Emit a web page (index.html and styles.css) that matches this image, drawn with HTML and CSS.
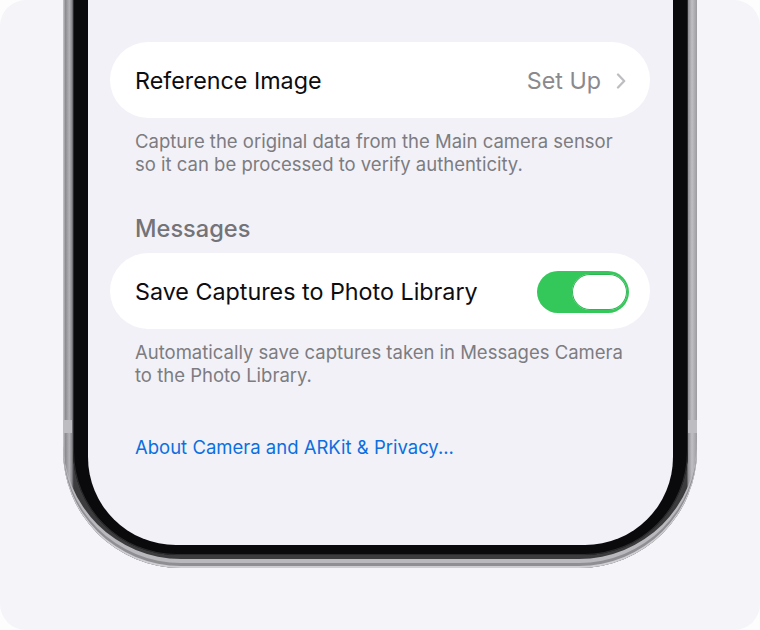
FILE: index.html
```html
<!DOCTYPE html>
<html lang="en">
<head>
<meta charset="utf-8">
<title>Camera Settings</title>
<link rel="stylesheet" href="styles.css">
</head>
<body>
<div class="card">
  <div class="phone">
    <div class="bezel">
      <div class="screen">
        <div class="group">
          <div class="row">
            <span class="row-title">Reference Image</span>
            <span class="row-detail">Set Up
              <svg class="chevron" width="10" height="16" viewBox="0 0 10 16"><path d="M2 1.5 L8.2 8 L2 14.5" fill="none" stroke="#bdbdc2" stroke-width="2.3" stroke-linecap="round" stroke-linejoin="round"/></svg>
            </span>
          </div>
        </div>
        <p class="footer">Capture the original data from the Main camera sensor so it can be processed to verify authenticity.</p>

        <h2 class="header">Messages</h2>
        <div class="group">
          <div class="row">
            <span class="row-title">Save Captures to Photo Library</span>
            <span class="toggle"><span class="knob"></span></span>
          </div>
        </div>
        <p class="footer">Automatically save captures taken in Messages Camera to the Photo Library.</p>

        <a class="link" href="#">About Camera and ARKit &amp; Privacy...</a>
      </div>
    </div>
  </div>
</div>
</body>
</html>
```

FILE: styles.css
```css
* { box-sizing: border-box; }
html, body { margin: 0; padding: 0; background: #fdfdfe; }
body { width: 760px; height: 630px; overflow: hidden; font-family: Inter, "Noto Sans", "Liberation Sans", sans-serif; }

.card {
  width: 760px;
  height: 630px;
  background: #f5f4f9;
  border-radius: 26px;
  overflow: hidden;
}

.phone {
  position: relative;
  margin-left: 63px;
  width: 634px;
  height: 568px;
  padding: 0 9px 13px 10px;
  background: linear-gradient(90deg, #c9c9cd 0, #8d8d91 0.4%, #b4b4b8 1%, #8a8a8e 1.4%, #3c3c3f 1.7%, #3c3c3f 98.4%, #8f8f93 98.6%, #c0c0c4 99.2%, #9c9ca0 100%);
  border-radius: 0 0 118px 118px;
  box-shadow: inset 0 -2px 0 #cfcfd3, inset 0 -5px 0 #8f8f93, inset 0 -9px 0 #b9b9bd;
}
.phone::before,
.phone::after {
  content: "";
  position: absolute;
  top: 420px;
  width: 9px;
  height: 13px;
  background: #bdbdc1;
}
.phone::before { left: 0; }
.phone::after { right: 0; }

.bezel {
  height: 555px;
  padding: 0 15px 10px;
  background: #0a0a0c;
  border-radius: 0 0 104px 104px;
  box-shadow: inset 1px 0 0 #2c2c2e, inset -1px 0 0 #2c2c2e, inset 0 -1px 0 #2c2c2e;
}

.screen {
  height: 545px;
  background: #f2f1f7;
  border-radius: 0 0 88px 88px;
  padding: 42px 23px 0 22px;
  display: flex;
  flex-direction: column;
}

.group {
  background: #ffffff;
  border-radius: 38px;
}
.row {
  height: 76px;
  padding: 1px 21px 0 25px;
  display: flex;
  align-items: center;
  justify-content: space-between;
}
.row-title {
  font-size: 23.3px;
  letter-spacing: 0;
  color: #0d0d0f;
}
.row-detail {
  display: flex;
  align-items: center;
  gap: 15px;
  font-size: 23.3px;
  letter-spacing: 0;
  color: #8a8a8e;
  padding-right: 3px;
}
.chevron { display: block; }

.footer {
  margin: 12px 0 0;
  padding: 0 25px;
  font-size: 18.5px;
  line-height: 23px;
  color: #7c7c81;
  letter-spacing: 0;
}

.header {
  margin: 40px 0 11px;
  padding: 0 25px;
  font-size: 23.6px;
  line-height: 26px;
  font-weight: 500;
  color: #737378;
  letter-spacing: 0;
}

.toggle {
  width: 92px;
  height: 42px;
  border-radius: 21px;
  background: #34c759;
  padding: 3px 2px 3px 35px;
  display: flex;
}
.knob {
  width: 55px;
  height: 36px;
  border-radius: 18px;
  background: #ffffff;
  box-shadow: inset 0 0 0 1px #2fb453;
}

.link {
  margin-top: 49px;
  padding: 0 25px;
  font-size: 18.5px;
  line-height: 23px;
  color: #0b6fe0;
  text-decoration: none;
}
```
